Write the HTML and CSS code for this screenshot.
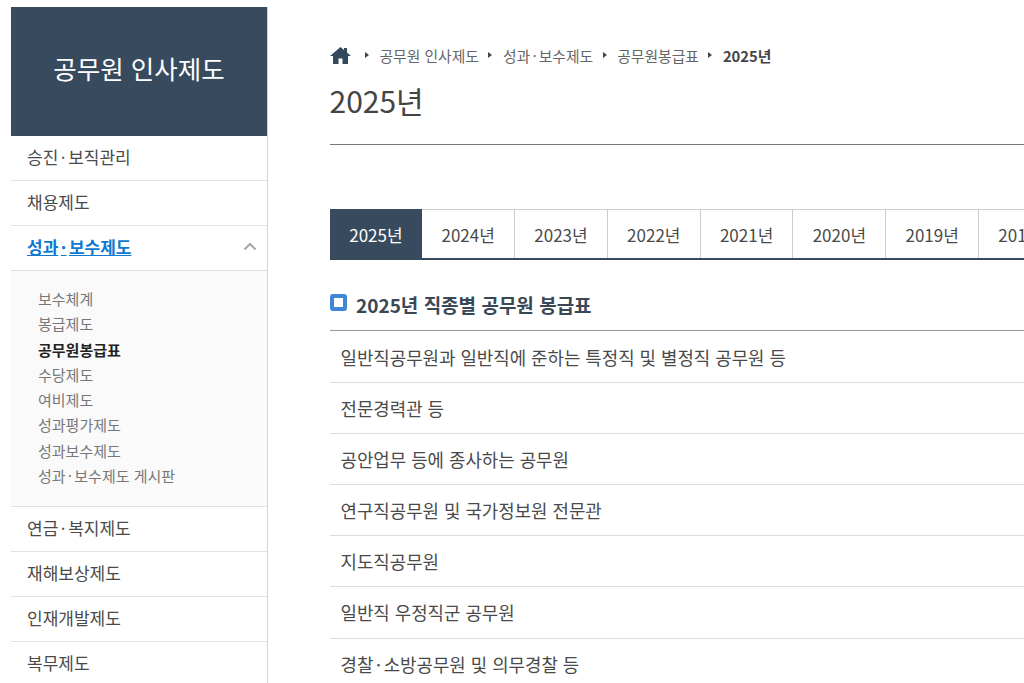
FILE: index.html
```html
<!DOCTYPE html>
<html lang="ko">
<head>
<meta charset="utf-8">
<title>2025년</title>
<link rel="stylesheet" href="styles.css">
</head>
<body>
<div class="page">
  <aside class="side">
    <div class="side-title">공무원 인사제도</div>
    <ul class="menu">
      <li class="item">승진<span class="dot">·</span>보직관리</li>
      <li class="item">채용제도</li>
      <li class="item active"><a>성과<span class="dot">·</span>보수제도</a>
        <svg class="chev" width="14" height="9" viewBox="0 0 14 9"><path d="M1.500 7.500 7 2l5.500 5.500" fill="none" stroke="#a8a8a8" stroke-width="2"/></svg>
      </li>
      <li class="sub">
        <div>보수체계</div>
        <div>봉급제도</div>
        <div class="on">공무원봉급표</div>
        <div>수당제도</div>
        <div>여비제도</div>
        <div>성과평가제도</div>
        <div>성과보수제도</div>
        <div>성과<span class="dot">·</span>보수제도 게시판</div>
      </li>
      <li class="item">연금<span class="dot">·</span>복지제도</li>
      <li class="item">재해보상제도</li>
      <li class="item">인재개발제도</li>
      <li class="item">복무제도</li>
    </ul>
  </aside>
  <main class="main">
    <nav class="crumbs">
      <svg class="home" width="21" height="17" viewBox="0 0 21 17"><path fill="#34495e" d="M10.500 0 0 9h3v8h5.500v-5.500h4V17H18V9h3l-4-3.400V1h-3v2.100z"/></svg>
      <i class="tri"></i><span>공무원 인사제도</span>
      <i class="tri"></i><span>성과<span class="dot">·</span>보수제도</span>
      <i class="tri"></i><span>공무원봉급표</span>
      <i class="tri"></i><b>2025년</b>
    </nav>
    <h1 class="title">2025년</h1>
    <div class="tabs">
      <div class="tab cur">2025년</div>
      <div class="tab">2024년</div>
      <div class="tab">2023년</div>
      <div class="tab">2022년</div>
      <div class="tab">2021년</div>
      <div class="tab">2020년</div>
      <div class="tab">2019년</div>
      <div class="tab">2018년</div>
    </div>
    <h2 class="head"><i class="mark"></i>2025년 직종별 공무원 봉급표</h2>
    <ul class="rows">
      <li>일반직공무원과 일반직에 준하는 특정직 및 별정직 공무원 등</li>
      <li>전문경력관 등</li>
      <li>공안업무 등에 종사하는 공무원</li>
      <li>연구직공무원 및 국가정보원 전문관</li>
      <li>지도직공무원</li>
      <li>일반직 우정직군 공무원</li>
      <li>경찰<span class="dot">·</span>소방공무원 및 의무경찰 등</li>
    </ul>
  </main>
</div>
</body>
</html>
```
FILE: styles.css
```css
* { box-sizing: border-box; }
html, body { margin: 0; height: 683px; overflow: hidden; background: #fff; }
body { font-family: "Noto Sans CJK KR", "Noto Sans", sans-serif; color: #444; }
ul { list-style: none; margin: 0; padding: 0; }
.dot { margin: 0 0.15em; }
.page { display: flex; align-items: flex-start; width: 1024px; height: 683px; overflow: hidden; padding: 7px 0 0 11px; }
.side { flex: 0 0 257px; width: 257px; border-right: 1px solid #d2d4d8; }
.side-title { height: 129px; background: #384a5e; color: #fff; font-size: 25.500px; line-height: 122px; text-align: center; }
.item { position: relative; height: 45px; line-height: 42px; padding-left: 16px; font-size: 17px; color: #4a4a4a; border-bottom: 1px solid #e2e2e2; }
.active { font-weight: 700; color: #0f78d0; }
.active a { text-decoration: underline; }
.chev { position: absolute; right: 10px; top: 16px; }
.sub { background: #fafafa; padding: 15px 0 16px 27px; height: 236px; border-bottom: 1px solid #e2e2e2; font-size: 15px; line-height: 25.300px; color: #777; }
.sub .on { font-weight: 700; color: #222; }
.main { flex: none; width: 760px; margin-left: 61.500px; }
.crumbs { display: flex; align-items: center; height: 20px; margin-top: 38px; font-size: 14.800px; color: #666; white-space: nowrap; }
.crumbs b { color: #444; font-weight: 700; }
.home { margin-right: 14.500px; }
.tri { width: 0; height: 0; border-left: 4px solid #445; border-top: 3px solid transparent; border-bottom: 3px solid transparent; margin: 0 10.500px 0 9.500px; }
.home + .tri { margin-left: 0; }
.title { margin: 13px 0 0; font-size: 30px; font-weight: 400; line-height: 44px; height: 67px; border-bottom: 1px solid #777; color: #444; }
.tabs { display: flex; margin-top: 64px; height: 51px; border-top: 1px solid #ccc; border-bottom: 2px solid #384a5e; width: 760px; }
.tab { flex: 0 0 92.800px; text-align: center; line-height: 50px; font-size: 17px; color: #4a4a4a; border-right: 1px solid #ccc; }
.tab.cur { background: #384a5e; color: #fff; margin-top: -1px; height: 51px; line-height: 52px; border-right: 0; }
.head { display: flex; align-items: center; margin: 0; height: 71px; padding-top: 18px; font-size: 19px; font-weight: 700; color: #3a4856; border-bottom: 1px solid #999; }
.mark { width: 17px; height: 17px; border: 4px solid #3f86d6; border-radius: 3px; margin-right: 9.500px; margin-top: -4px; }
.rows { padding-top: 0.500px; }
.rows li { height: 51.200px; line-height: 50px; padding-left: 11px; font-size: 17.850px; color: #4a4a4a; border-bottom: 1px solid #ddd; white-space: nowrap; }
```
